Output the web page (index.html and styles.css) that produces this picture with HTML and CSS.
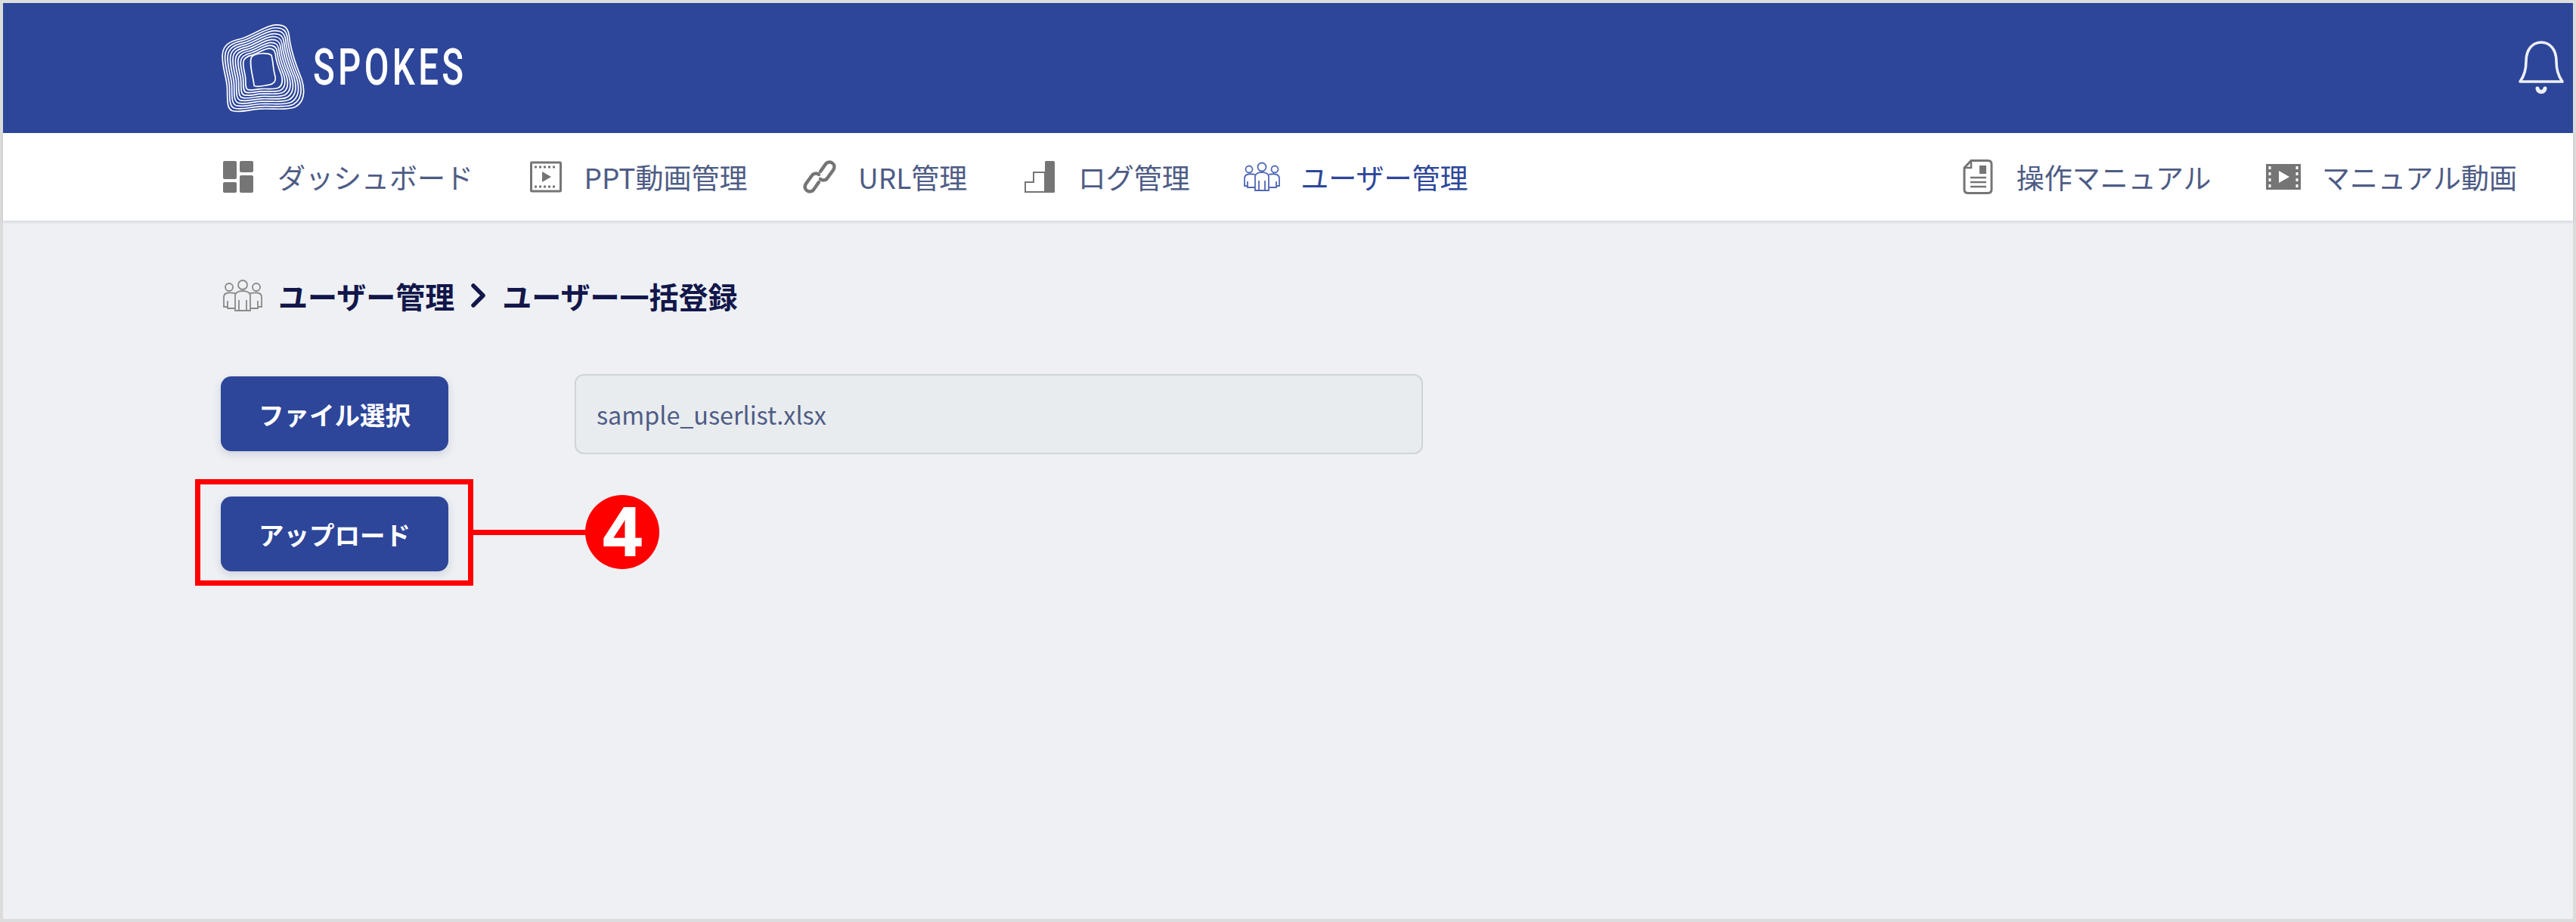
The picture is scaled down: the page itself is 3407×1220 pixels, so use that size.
FILE: index.html
```html
<!DOCTYPE html>
<html lang="ja">
<head>
<meta charset="utf-8">
<title>SPOKES</title>
<link rel="stylesheet" href="styles.css">
</head>
<body>
<div class="frame">
  <header class="topbar">
    <div class="brand">
      <svg class="brand-mark" viewBox="90 90 335 355" aria-hidden="true">
        <defs>
          <path id="ring" class="ring-path" d="M310 95C340 95 355 105 360 135C365 190 385 250 410 310C425 360 420 400 385 420C350 435 300 425 245 428C205 430 170 445 135 435C110 425 118 380 115 340C112 300 92 250 97 210C100 175 125 160 170 150C220 135 270 95 310 95Z"/>
        </defs>
        <g class="rings">
          <use href="#ring"/>
          <use href="#ring" transform="translate(255 275) scale(.935) translate(-255 -275)"/>
          <use href="#ring" transform="translate(255 275) scale(.87) translate(-255 -275)"/>
          <use href="#ring" transform="translate(255 275) scale(.805) translate(-255 -275)"/>
          <use href="#ring" transform="translate(255 275) scale(.74) translate(-255 -275)"/>
          <use href="#ring" transform="translate(255 275) scale(.675) translate(-255 -275)"/>
          <use href="#ring" transform="translate(255 275) scale(.61) translate(-255 -275)"/>
          <use href="#ring" transform="translate(255 275) scale(.545) translate(-255 -275)"/>
          <use href="#ring" transform="translate(255 275) scale(.48) translate(-255 -275)"/>
          <path class="ring-path" d="M212 222C230 205 275 205 290 215C298 240 296 270 306 302C308 318 302 328 282 332C262 334 240 345 222 336C218 300 200 245 212 222Z"/>
        </g>
      </svg>
      <span class="brand-name">SPOKES</span>
    </div>
    <svg class="bell" viewBox="0 0 62 70" aria-hidden="true">
      <path d="M3 54C9 46 11 38 11 27C11 12 19 2 31 2C43 2 51 12 51 27C51 38 53 46 59 54Z"/>
      <path class="bell-clap" d="M26 63C27 69 35 69 36 63"/>
    </svg>
  </header>

  <nav class="mainnav">
    <ul class="navgroup">
      <li class="navitem">
        <svg class="navicon" viewBox="0 0 50 42" aria-hidden="true"><g class="solid"><rect x="4" y="0" width="18" height="24" rx="2"/><rect x="26" y="0" width="18" height="15" rx="2"/><rect x="4" y="28" width="18" height="14" rx="2"/><rect x="26" y="19" width="18" height="23" rx="2"/></g></svg>
        <span>ダッシュボード</span>
      </li>
      <li class="navitem">
        <svg class="navicon" viewBox="0 0 50 42" aria-hidden="true">
          <rect class="line" x="5.5" y="2" width="39" height="38" rx="1" stroke-width="3"/>
          <path class="dash" d="M10 8H40M10 34H40"/>
          <path class="solid" d="M20 14L32 21L20 28Z"/>
        </svg>
        <span>PPT動画管理</span>
      </li>
      <li class="navitem">
        <svg class="navicon" viewBox="0 0 50 42" aria-hidden="true">
          <g class="line" stroke-width="4.5" stroke-linecap="round">
            <path d="M26 14L33 4C35 1 40 1 42 3C45 5 45 9 43 12L35 23C33 26 28 26 26 24"/>
            <path d="M24 28L17 38C15 41 10 41 8 39C5 37 5 33 7 30L15 19C17 16 22 16 24 18"/>
          </g>
        </svg>
        <span>URL管理</span>
      </li>
      <li class="navitem">
        <svg class="navicon" viewBox="0 0 50 42" aria-hidden="true">
          <path class="line" stroke-width="2" d="M6 41V28H17V15H32V41Z"/>
          <rect class="solid" x="32" y="0" width="13" height="42" rx="1.5"/>
        </svg>
        <span>ログ管理</span>
      </li>
      <li class="navitem navitem-active">
        <svg class="navicon" viewBox="0 -4 50 46" aria-hidden="true">
          <g class="line" stroke-width="1.8">
            <circle cx="25" cy="6" r="5.5"/><path d="M16 37V19C16 15 20 13 25 13C30 13 34 15 34 19V37Z"/><path d="M21 37V24M29 37V24"/>
            <circle cx="8" cy="9" r="4.5"/><path d="M16 16C12 15 2 14 2 21V31H6V25M6 31V33H16"/>
            <circle cx="42" cy="9" r="4.5"/><path d="M34 16C38 15 48 14 48 21V31H44V25M44 31V33H34"/>
          </g>
        </svg>
        <span>ユーザー管理</span>
      </li>
    </ul>
    <ul class="navgroup">
      <li class="navitem">
        <svg class="navicon" viewBox="0 0 50 46" aria-hidden="true">
          <path class="line" stroke-width="3" d="M16 1.500H38C41 1.500 43 3 43 6V40C43 43 41 44.500 38 44.500H12C9 44.500 7 43 7 40V11Z"/>
          <path class="line" stroke-width="2.500" d="M16 3V11H8"/>
          <rect class="solid" x="27" y="8" width="9" height="11"/>
          <path class="line" stroke-width="2.500" d="M15 24H36M15 30H36M15 36H36"/>
        </svg>
        <span>操作マニュアル</span>
      </li>
      <li class="navitem">
        <svg class="navicon" viewBox="0 0 50 34" aria-hidden="true">
          <rect class="solid" x="2" y="0" width="46" height="34"/>
          <path class="film-holes" d="M7 3V31M43 3V31"/>
          <path class="film-play" d="M19 9L33 17L19 25Z"/>
        </svg>
        <span>マニュアル動画</span>
      </li>
    </ul>
  </nav>

  <main class="content">
    <h1 class="crumbs">
      <svg class="crumb-icon" viewBox="0 0 54 42" aria-hidden="true">
        <g class="line" stroke-width="1.800">
          <circle cx="27" cy="7" r="6"/><path d="M17 41V21C17 17 22 15 27 15C32 15 37 17 37 21V41Z"/><path d="M22 41V27M32 41V27"/>
          <circle cx="9" cy="10" r="5"/><path d="M17 18C12 17 2 16 2 23V36H7V28M7 36V38H17"/>
          <circle cx="45" cy="10" r="5"/><path d="M37 18C42 17 52 16 52 23V36H47V28M47 36V38H37"/>
        </g>
      </svg>
      <span>ユーザー管理</span>
      <svg class="chevron" viewBox="0 0 21 32" aria-hidden="true"><path d="M4 3L17 16L4 29"/></svg>
      <span>ユーザー一括登録</span>
    </h1>

    <div class="filerow">
      <button class="btn" type="button">ファイル選択</button>
      <div class="filename">sample_userlist.xlsx</div>
    </div>

    <div class="uploadrow">
      <div class="callout-wrap">
        <button class="btn" type="button">アップロード</button>
        <div class="callout-box"></div>
        <div class="callout-line"></div>
        <div class="callout-num">4</div>
      </div>
    </div>
  </main>
</div>
</body>
</html>
```
FILE: styles.css
```css
* { box-sizing: border-box; }
html, body { margin: 0; padding: 0; }
body {
  font-family: "Noto Sans CJK JP", "Noto Sans", sans-serif;
  background: #eef0f4;
}
.frame {
  height: 1220px;
  border: 4px solid #dcdcdc;
  background: #eef0f4;
  display: flex;
  flex-direction: column;
}

/* top bar */
.topbar {
  height: 172px;
  background: #2d4699;
  display: flex;
  align-items: center;
  justify-content: space-between;
  padding: 0 11px 0 288px;
  flex: none;
}
.brand { display: flex; align-items: center; gap: 10px; }
.brand-mark { width: 112px; height: 119px; display: block; }
.rings { fill: none; stroke: #fff; }
.ring-path { vector-effect: non-scaling-stroke; stroke-width: 1.7px; }
.brand-name {
  font-family: "Roboto", sans-serif;
  font-weight: 500;
  font-size: 66px;
  line-height: 1;
  color: #fff;
  letter-spacing: 6px;
  display: inline-block;
  transform: scaleX(.72);
  transform-origin: left center;
  width: 200px;
}
.bell { width: 62px; height: 70px; display: block; margin-bottom: 2px; fill: none; stroke: #eef0f6; stroke-width: 3.6; stroke-linejoin: round; }
.bell-clap { stroke-width: 5; stroke-linecap: round; }

/* nav */
.mainnav {
  height: 116px;
  background: #fff;
  display: flex;
  align-items: center;
  justify-content: space-between;
  padding: 0 74px 0 287px;
  box-shadow: 0 2px 4px rgba(40, 50, 90, .14);
  flex: none;
  position: relative;
}
.navgroup { display: flex; align-items: center; gap: 70.5px; list-style: none; margin: 0; padding: 0; }
.navitem {
  display: flex;
  align-items: center;
  gap: 26px;
  font-size: 37px;
  line-height: 48px;
  color: #4e5c85;
  white-space: nowrap;
}
.navitem-active { color: #2d4699; }
.navicon { width: 50px; height: 46px; display: block; color: #757575; }
.navitem-active .navicon { color: #2d4699; }
.solid { fill: #757575; }
.line { fill: none; stroke: #757575; }
.navitem-active .line { stroke: #5069b4; }
.dash { fill: none; stroke: #757575; stroke-width: 3; stroke-dasharray: 3 3; }
.film-holes { fill: none; stroke: #fff; stroke-width: 3; stroke-dasharray: 4 4; }
.film-play { fill: #fff; }

/* content */
.content { padding: 75px 0 0 288px; flex: 1; }
.crumbs {
  display: flex;
  align-items: center;
  margin: 0 0 80px;
  height: 48px;
  font-size: 39px;
  font-weight: 700;
  line-height: 48px;
  color: #12174a;
}
.crumb-icon { width: 54px; height: 42px; margin: 0 20px 0 2px; display: block; flex: none; }
.crumb-icon .line { stroke: #8a8a8a; }
.chevron { width: 21px; height: 32px; margin: 0 21px; display: block; fill: none; stroke: #12174a; stroke-width: 5.5; stroke-linecap: round; stroke-linejoin: round; flex: none; }

.filerow { display: flex; align-items: flex-start; gap: 167px; }
.filerow .btn { margin-top: 3px; }
.btn {
  width: 301px;
  height: 99px;
  border: 0;
  border-radius: 14px;
  background: #2d4699;
  color: #fff;
  font-family: inherit;
  font-size: 33.5px;
  font-weight: 700;
  box-shadow: 0 4px 12px rgba(40, 50, 90, .16);
  padding: 0;
  display: block;
}
.filename {
  width: 1122px;
  height: 106px;
  background: #e9ecef;
  border: 2px solid #ced4da;
  border-radius: 12px;
  color: #4e5c85;
  font-size: 32.3px;
  display: flex;
  align-items: center;
  padding-left: 27px;
}
.uploadrow { margin-top: 56px; display: flex; }
.callout-wrap { position: relative; }
.callout-box {
  position: absolute;
  left: -34px; top: -23px;
  width: 368px; height: 141px;
  border: 7px solid #ff0000;
}
.callout-line {
  position: absolute;
  left: 334px; top: 44px;
  width: 150px; height: 7px;
  background: #ff0000;
}
.callout-num {
  position: absolute;
  left: 482px; top: -2px;
  width: 98px; height: 98px;
  border-radius: 50%;
  background: #ff0000;
  color: #fff;
  font-family: "Liberation Sans", sans-serif;
  font-weight: 700;
  font-size: 90px;
  line-height: 98px;
  text-align: center;
  -webkit-text-stroke: 2px #fff;
}
```
